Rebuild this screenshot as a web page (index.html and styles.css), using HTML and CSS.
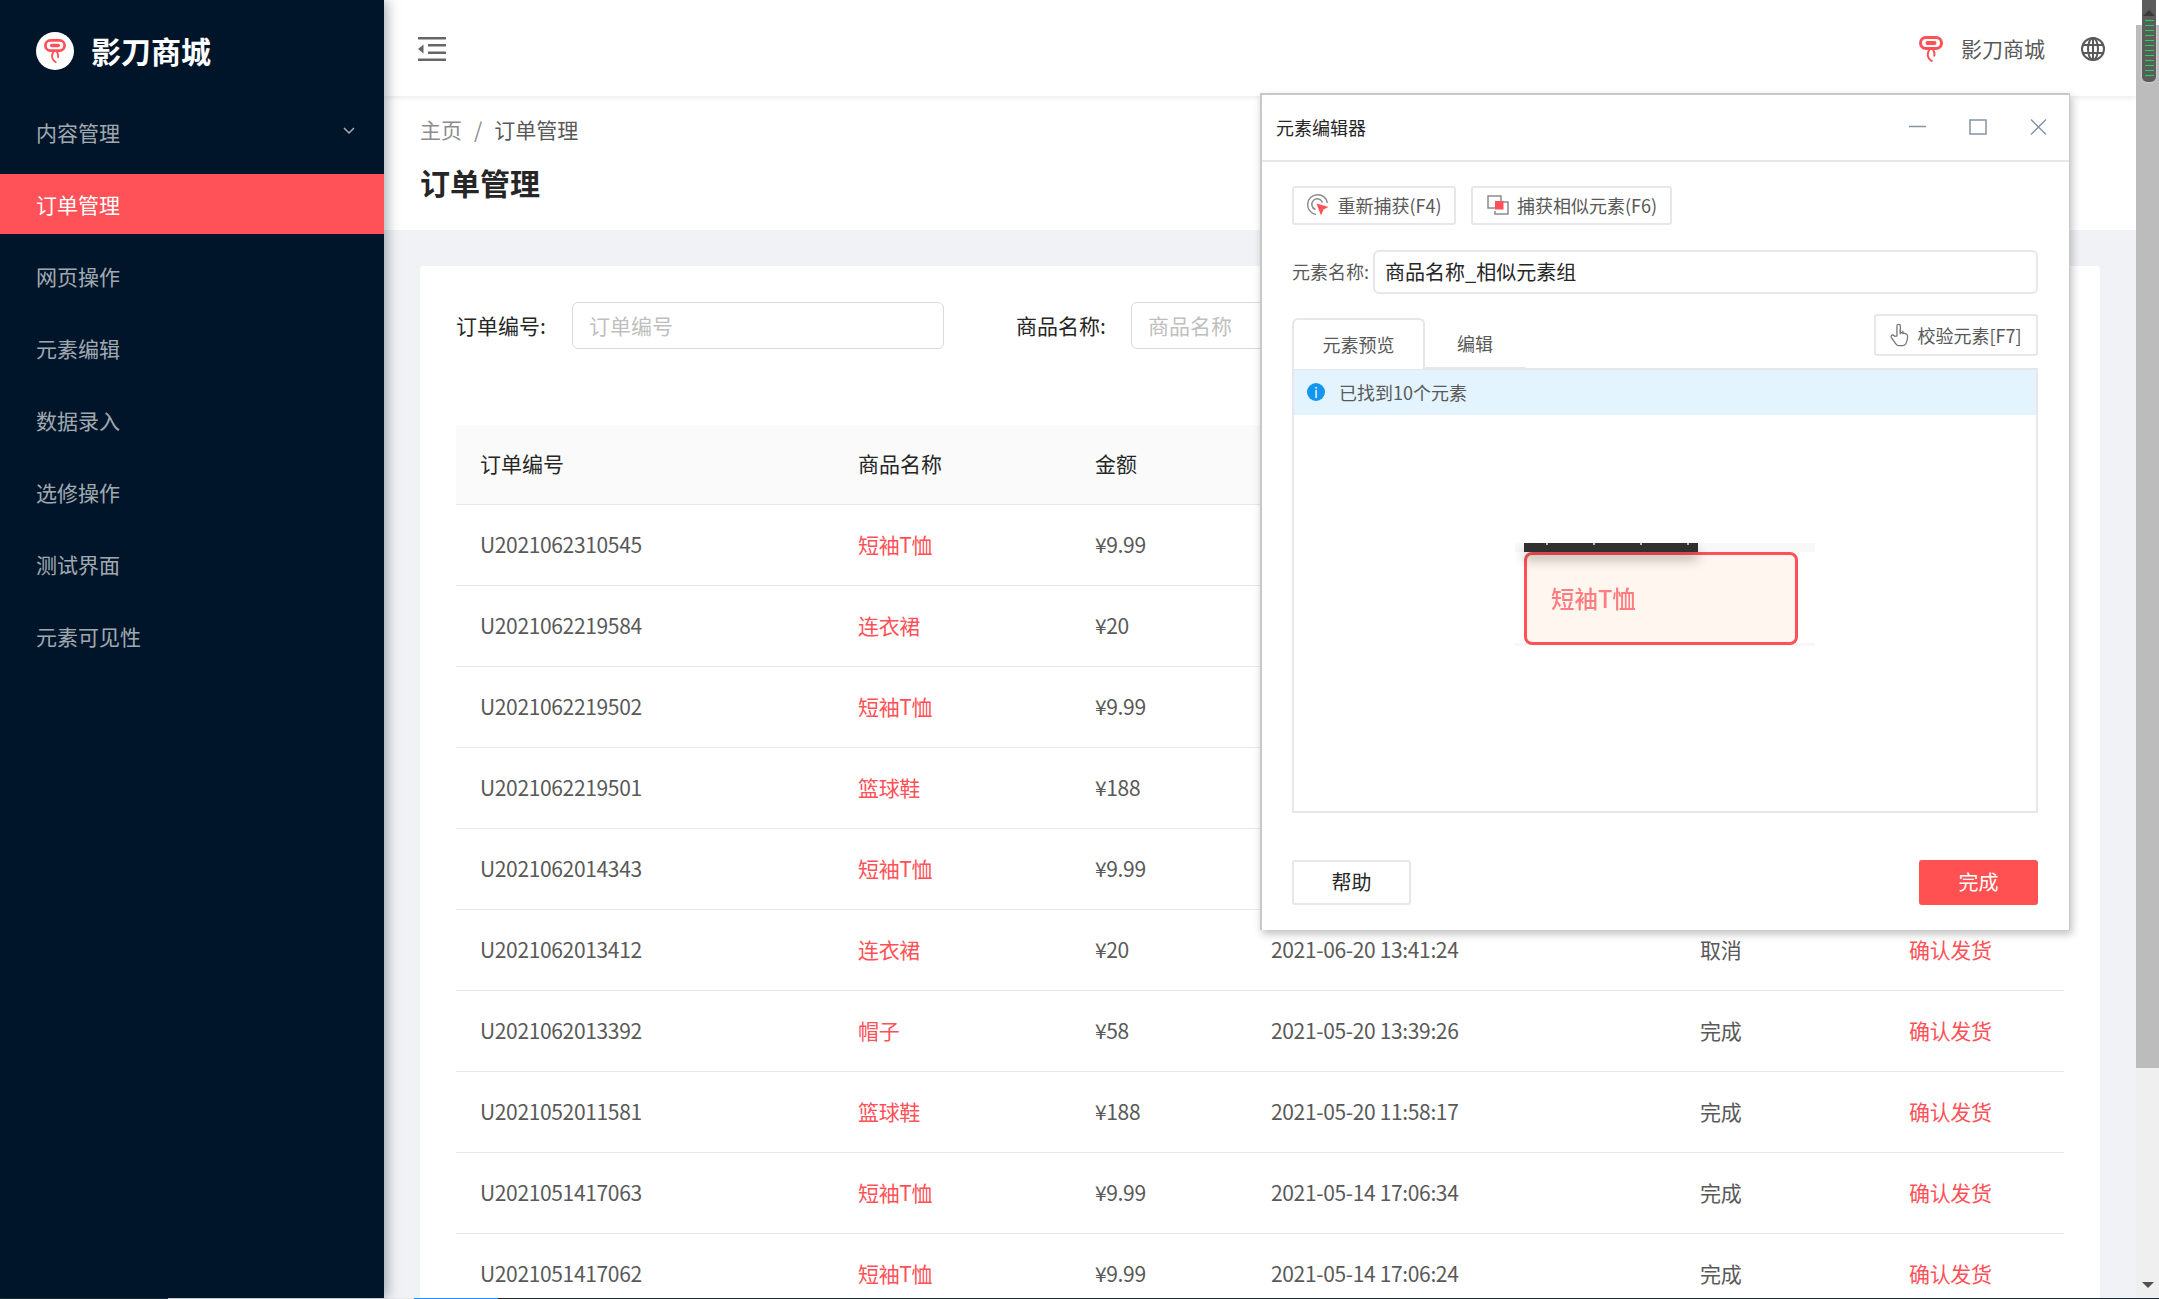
FILE: index.html
```html
<!DOCTYPE html>
<html lang="zh-CN">
<head>
  <meta charset="UTF-8" />
  <title>订单管理</title>
  <link rel="stylesheet" href="styles.css">
</head>
<body>
  <svg class="defs" width="0" height="0">
    <symbol id="logo" viewBox="0 0 24 26">
      <rect x="1.500" y="1.500" width="21" height="11" rx="5.500" fill="none" stroke="#ff5157" stroke-width="3"/>
      <rect x="6.500" y="5" width="11" height="4" rx="2" fill="#ff5157"/>
      <path d="M10.500 13.500c-2 3-2.500 6-.5 9 .8 1.300 2 2.200 3.500 3M14 13.500c1.500 2.500 2 4.500 1 7" fill="none" stroke="#ff5157" stroke-width="2"/>
    </symbol>
  </svg>

  <div class="app">
    <aside class="sidebar">
      <div class="brand">
        <span class="brand-mark"><svg width="22" height="24"><use href="#logo"/></svg></span>
        <span class="brand-name">影刀商城</span>
      </div>
      <ul class="menu">
        <li class="menu-item">内容管理
          <svg class="chevron" width="12" height="8" viewBox="0 0 12 8"><path d="M1 1l5 5 5-5" fill="none" stroke="currentColor" stroke-width="1.500"/></svg>
        </li>
        <li class="menu-item active">订单管理</li>
        <li class="menu-item">网页操作</li>
        <li class="menu-item">元素编辑</li>
        <li class="menu-item">数据录入</li>
        <li class="menu-item">选修操作</li>
        <li class="menu-item">测试界面</li>
        <li class="menu-item">元素可见性</li>
      </ul>
    </aside>

    <div class="main">
      <header class="topbar">
        <svg class="toggle" width="28" height="24" viewBox="0 0 28 24" fill="#666">
          <rect x="0" y="0" width="28" height="2.500"/>
          <rect x="10" y="7" width="18" height="2.500"/>
          <rect x="10" y="14.500" width="18" height="2.500"/>
          <rect x="0" y="21.500" width="28" height="2.500"/>
          <path d="M0 12l5.500-4.500v9z"/>
        </svg>
        <div class="topbar-right">
          <svg width="24" height="26"><use href="#logo"/></svg>
          <span class="shop-name">影刀商城</span>
          <svg class="globe" width="24" height="24" viewBox="0 0 24 24" fill="none" stroke="#595959" stroke-width="2">
            <circle cx="12" cy="12" r="11"/>
            <ellipse cx="12" cy="12" rx="5" ry="11"/>
            <path d="M12 1v22M1.500 8h21M1.500 16h21"/>
          </svg>
        </div>
      </header>

      <div class="page-head">
        <div class="breadcrumb"><span class="crumb-link">主页</span><span class="crumb-sep">/</span><span>订单管理</span></div>
        <h1 class="page-title">订单管理</h1>
      </div>

      <div class="content">
        <div class="card">
          <form class="filter">
            <label class="filter-label">订单编号:</label>
            <input class="filter-input" type="text" placeholder="订单编号">
            <label class="filter-label second">商品名称:</label>
            <input class="filter-input" type="text" placeholder="商品名称">
          </form>

          <table class="orders">
            <colgroup>
              <col class="c-no"><col class="c-name"><col class="c-price"><col class="c-time"><col class="c-state"><col class="c-action">
            </colgroup>
            <thead>
              <tr><th>订单编号</th><th>商品名称</th><th>金额</th><th></th><th></th><th></th></tr>
            </thead>
            <tbody>
              <tr><td>U2021062310545</td><td class="red">短袖T恤</td><td>¥9.99</td><td></td><td></td><td></td></tr>
              <tr><td>U2021062219584</td><td class="red">连衣裙</td><td>¥20</td><td></td><td></td><td></td></tr>
              <tr><td>U2021062219502</td><td class="red">短袖T恤</td><td>¥9.99</td><td></td><td></td><td></td></tr>
              <tr><td>U2021062219501</td><td class="red">篮球鞋</td><td>¥188</td><td></td><td></td><td></td></tr>
              <tr><td>U2021062014343</td><td class="red">短袖T恤</td><td>¥9.99</td><td></td><td></td><td></td></tr>
              <tr><td>U2021062013412</td><td class="red">连衣裙</td><td>¥20</td><td>2021-06-20 13:41:24</td><td>取消</td><td class="red">确认发货</td></tr>
              <tr><td>U2021062013392</td><td class="red">帽子</td><td>¥58</td><td>2021-05-20 13:39:26</td><td>完成</td><td class="red">确认发货</td></tr>
              <tr><td>U2021052011581</td><td class="red">篮球鞋</td><td>¥188</td><td>2021-05-20 11:58:17</td><td>完成</td><td class="red">确认发货</td></tr>
              <tr><td>U2021051417063</td><td class="red">短袖T恤</td><td>¥9.99</td><td>2021-05-14 17:06:34</td><td>完成</td><td class="red">确认发货</td></tr>
              <tr><td>U2021051417062</td><td class="red">短袖T恤</td><td>¥9.99</td><td>2021-05-14 17:06:24</td><td>完成</td><td class="red">确认发货</td></tr>
            </tbody>
          </table>
        </div>
      </div>
    </div>

    <div class="scrollbar">
      <div class="scroll-up"></div>
      <div class="scroll-thumb"></div>
      <div class="scroll-track"><span class="arrow-down"></span></div>
      <div class="scroll-overlay">
        <span class="arrow-up"></span>
        <span class="dashes"></span>
      </div>
    </div>
  </div>

  <div class="taskbar-edge">
    <span class="edge-dark"></span><span class="edge-light"></span><span class="edge-blue"></span><span class="edge-rest"></span>
  </div>

  <section class="editor">
    <div class="editor-title">
      <span>元素编辑器</span>
      <div class="win-btns">
        <svg width="17" height="17" viewBox="0 0 17 17"><path d="M0 8.500h17" stroke="#8592a6" stroke-width="1.500"/></svg>
        <svg width="18" height="16" viewBox="0 0 18 16"><rect x="1" y="1" width="16" height="14" fill="none" stroke="#8592a6" stroke-width="1.500"/></svg>
        <svg width="17" height="16" viewBox="0 0 17 16"><path d="M1 .5l15 15M16 .5l-15 15" fill="none" stroke="#8592a6" stroke-width="1.400"/></svg>
      </div>
    </div>

    <div class="editor-body">
      <div class="capture-row">
        <button type="button" class="btn">
          <svg width="24" height="24" viewBox="0 0 24 24" fill="none" stroke="#8c8c8c" stroke-width="1.500">
            <path d="M10 21.500A10 10 0 1 1 21.500 10"/>
            <path d="M9.500 16.500A5.500 5.500 0 1 1 16.500 9.500"/>
            <path d="M10.500 10.500l12 3.500-5 2.500-2.500 6z" fill="#ff5157" stroke="none"/>
          </svg>
          重新捕获(F4)
        </button>
        <button type="button" class="btn">
          <svg width="24" height="24" viewBox="0 0 24 24" fill="none" stroke="#8c8c8c" stroke-width="1.500">
            <path d="M10 15H2V3h13v5"/>
            <path d="M17 9h5v12H9v-3"/>
            <rect x="9" y="8" width="8.500" height="8.500" fill="#ff5157" stroke="none"/>
          </svg>
          捕获相似元素(F6)
        </button>
      </div>

      <div class="name-row">
        <label class="name-label">元素名称:</label>
        <input class="name-input" type="text" value="商品名称_相似元素组">
      </div>

      <div class="tab-row">
        <div class="tab active">元素预览</div>
        <div class="tab second">编辑</div>
        <button type="button" class="btn check-btn">
          <svg width="19" height="24" viewBox="0 0 22 28" fill="none" stroke="#777" stroke-width="1.500">
            <path d="M8 15V3.500a2 2 0 0 1 4 0V11l6 1.500c2 .6 2.500 2 2.500 3.500 0 3-1 6-2 8-1 1.500-2 2.500-4 2.500h-4c-2 0-3-1-4-2.500L1.500 17c-.8-1.500.2-3 1.500-3 1 0 2 .7 2.500 1.500z"/>
            <path d="M12 8v5M15 9v4"/>
          </svg>
          校验元素[F7]
        </button>
      </div>

      <div class="preview">
        <div class="notice">
          <span class="notice-icon">i</span>
          已找到10个元素
        </div>
        <div class="preview-stage">
          <div class="shot">
            <div class="shot-tooltip"></div>
            <div class="shot-box">短袖T恤</div>
          </div>
        </div>
      </div>

      <div class="editor-foot">
        <button type="button" class="btn foot-btn">帮助</button>
        <button type="button" class="btn foot-btn primary">完成</button>
      </div>
    </div>
  </section>
</body>
</html>
```

FILE: styles.css
```css
:root {
  --red: #ff5157;
  --line: #e8e8e8;
  --text: #595959;
  --dark: #262626;
}

* {
  box-sizing: border-box;
}

html, body {
  height: 100%;
  margin: 0;
  overflow: hidden;
}

body {
  font-family: "Noto Sans CJK SC", "Noto Sans", sans-serif;
  font-size: 21px;
  color: var(--text);
  background: #f0f2f5;
}

.defs {
  position: absolute;
}

.app {
  display: flex;
  height: 1298px;
}

/* sidebar */
.sidebar {
  flex: 0 0 384px;
  background: #00152a;
  box-shadow: 3px 0 12px rgba(0, 21, 41, 0.35);
  position: relative;
  z-index: 2;
}

.brand {
  display: flex;
  align-items: center;
  height: 102px;
  padding-left: 36px;
}

.brand-mark {
  display: flex;
  align-items: center;
  justify-content: center;
  width: 38px;
  height: 38px;
  margin-right: 17px;
  background: #fff;
  border-radius: 50%;
}

.brand-name {
  font-size: 30px;
  font-weight: 700;
  color: #fff;
  padding-bottom: 2px;
}

.menu {
  list-style: none;
  margin: 0;
  padding: 0;
}

.menu-item {
  display: flex;
  align-items: center;
  justify-content: space-between;
  height: 60px;
  margin-bottom: 12px;
  padding: 0 29px 1px 36px;
  color: rgba(255, 255, 255, 0.65);
}

.menu-item.active {
  background: var(--red);
  color: #fff;
}

.chevron {
  margin-top: -2px;
}

/* top */
.main {
  flex: 1;
  min-width: 0;
  overflow: hidden;
}

.topbar {
  display: flex;
  align-items: center;
  justify-content: space-between;
  height: 96px;
  padding: 2px 31px 0 34px;
  background: #fff;
  box-shadow: 0 1px 6px rgba(0, 21, 41, 0.1);
  position: relative;
}

.topbar-right {
  display: flex;
  align-items: center;
}

.shop-name {
  margin: 0 36px 2px 18px;
}

.page-head {
  height: 134px;
  padding: 15px 36px 0;
  background: #fff;
}

.breadcrumb {
  display: flex;
  align-items: center;
  height: 36px;
}

.crumb-link {
  color: #8c8c8c;
}

.crumb-sep {
  margin: 0 12px;
  color: #8c8c8c;
}

.page-title {
  margin: 14px 0 0;
  font-size: 30px;
  line-height: 42px;
  font-weight: 700;
  color: var(--dark);
}

.content {
  padding: 36px 36px 0;
}

.card {
  padding: 36px 36px 0;
  background: #fff;
  border-radius: 3px;
}

/* filter form */
.filter {
  display: flex;
  align-items: center;
  height: 47px;
  margin-bottom: 76px;
  white-space: nowrap;
}

.filter-label {
  flex: 0 0 116px;
  padding-bottom: 2px;
  color: var(--dark);
}

.filter-label.second {
  flex-basis: 115px;
  margin-left: 72px;
}

.filter-input {
  flex: 0 0 372px;
  height: 47px;
  padding: 0 16px 2px;
  border: 1.5px solid #d9d9d9;
  border-radius: 6px;
  font: inherit;
  background: #fff;
}

.filter-input::placeholder {
  color: #bfbfbf;
}

/* table */
.orders {
  width: 100%;
  border-collapse: separate;
  border-spacing: 0;
  table-layout: fixed;
}

.c-no { width: 378px; }
.c-name { width: 237px; }
.c-price { width: 176px; }
.c-time { width: 429px; }
.c-state { width: 209px; }

.orders th,
.orders td {
  height: 81px;
  padding: 0 24px 3px;
  border-bottom: 1px solid var(--line);
  text-align: left;
  font-weight: 400;
}

.orders td {
  letter-spacing: -0.35px;
}

.orders th {
  height: 80px;
  background: #fafafa;
  color: var(--dark);
}

.orders td.red {
  color: var(--red);
}

/* fake scrollbar from the screenshot */
.scrollbar {
  flex: 0 0 23px;
  display: flex;
  flex-direction: column;
  position: relative;
  background: #efefef;
}

.scroll-up {
  height: 25px;
  background: #fff;
}

.scroll-thumb {
  height: 1043px;
  background: #bcbcbc;
}

.scroll-track {
  flex: 1;
  display: flex;
  align-items: flex-end;
  justify-content: center;
  padding-bottom: 10px;
}

.arrow-down {
  border-left: 6px solid transparent;
  border-right: 6px solid transparent;
  border-top: 6px solid #505050;
}

.scroll-overlay {
  position: absolute;
  top: 0;
  left: 6px;
  width: 14px;
  height: 82px;
  display: flex;
  flex-direction: column;
  align-items: center;
  padding-top: 10px;
  background: #5c5c5c;
  border-radius: 0 0 5px 5px;
  box-shadow: 0 0 2px #fff;
}

.arrow-up {
  border-left: 6px solid transparent;
  border-right: 6px solid transparent;
  border-bottom: 6px solid #3a3a3a;
}

.dashes {
  width: 9px;
  height: 60px;
  margin-top: 4px;
  background: repeating-linear-gradient(#1fd655 0 1px, transparent 1px 5px);
}

.taskbar-edge {
  display: flex;
  height: 1px;
}

.edge-dark { width: 168px; background: #1c3038; }
.edge-light { width: 246px; background: #e8eaed; }
.edge-blue { width: 84px; background: #1e90ff; }
.edge-rest { flex: 1; background: #1c2b33; }

/* floating editor window */
.editor {
  position: absolute;
  left: 1260px;
  top: 93px;
  width: 810px;
  height: 837px;
  display: flex;
  flex-direction: column;
  background: #fff;
  border: 2px solid #c8c8c8;
  border-bottom: 0;
  border-right-width: 1px;
  box-shadow: 2px 4px 8px rgba(0, 0, 0, 0.25);
  z-index: 3;
}

.editor-title {
  flex: 0 0 67px;
  display: flex;
  align-items: center;
  justify-content: space-between;
  padding: 0 22px 2px 14px;
  border-bottom: 2px solid #e6e6ec;
  font-size: 18px;
  color: var(--dark);
}

.win-btns {
  display: flex;
  align-items: center;
  gap: 43px;
}

.editor-body {
  flex: 1;
  padding: 24px 31px 0 30px;
}

.btn {
  display: inline-flex;
  align-items: center;
  justify-content: center;
  padding: 0;
  font: inherit;
  font-size: 18px;
  color: var(--text);
  background: #fff;
  border: 2px solid #e6e6ec;
  border-radius: 3px;
  cursor: pointer;
}

.capture-row {
  display: flex;
  gap: 15px;
  height: 39px;
}

.capture-row .btn {
  gap: 7px;
  padding-bottom: 1px;
}

.capture-row .btn:first-child { width: 164px; }
.capture-row .btn:last-child { width: 201px; }

.name-row {
  display: flex;
  align-items: center;
  margin-top: 25px;
}

.name-label {
  flex: 0 0 81px;
  font-size: 18px;
  padding-bottom: 2px;
}

.name-input {
  flex: 1;
  height: 44px;
  padding: 0 10px 2px;
  font: inherit;
  font-size: 20px;
  color: var(--dark);
  border: 2px solid #e6e6ec;
  border-radius: 6px;
}

.tab-row {
  display: flex;
  align-items: flex-end;
  height: 76px;
  position: relative;
  margin-top: -2px;
}

.tab {
  width: 133px;
  height: 51px;
  line-height: 50px;
  text-align: center;
  font-size: 18px;
  margin-bottom: -1px;
  background: #fff;
  border-bottom: 2px solid #e6e6ec;
}

.tab.second {
  width: 100px;
}

.tab.active {
  line-height: 48px;
  border: 2px solid #e6e6ec;
  border-bottom: 0;
  border-radius: 6px 6px 0 0;
  position: relative;
  z-index: 1;
}

.check-btn {
  position: absolute;
  right: 0;
  top: 22px;
  width: 164px;
  height: 42px;
  gap: 8px;
  padding-bottom: 1px;
}

.preview {
  height: 445px;
  display: flex;
  flex-direction: column;
  border: 2px solid #e6e6ec;
}

.notice {
  display: flex;
  align-items: center;
  flex: 0 0 45px;
  padding: 0 0 1px 13px;
  gap: 14px;
  font-size: 18px;
  background: #e3f4fe;
}

.notice-icon {
  width: 18px;
  height: 18px;
  border-radius: 50%;
  background: #1296f0;
  color: #fff;
  font-size: 14px;
  line-height: 18px;
  text-align: center;
}

.preview-stage {
  flex: 1;
  display: flex;
  justify-content: center;
  padding: 128px 0 0 0;
}

.shot {
  width: 300px;
  height: 103px;
  padding: 0 17px 0 9px;
  background: linear-gradient(#f8f8f8 9px, #fff 9px 100px, #f8f8f8 100px);
  position: relative;
  filter: blur(0.5px);
}

.shot-tooltip {
  width: 174px;
  height: 9px;
  background:
    repeating-linear-gradient(90deg, transparent 0 22px, #bbb 22px 24px, transparent 24px 47px) 0 0 / 100% 2px no-repeat,
    #303030;
  box-shadow: 0 8px 12px rgba(0, 0, 0, 0.28);
  position: relative;
  z-index: 1;
}

.shot-box {
  display: flex;
  align-items: center;
  height: 93px;
  padding: 0 0 2px 24px;
  font-size: 23.500px;
  font-weight: 500;
  color: #ff7d80;
  background: #fff7ef;
  border: 3px solid var(--red);
  border-radius: 8px;
}

.editor-foot {
  display: flex;
  justify-content: space-between;
  margin-top: 47px;
}

.foot-btn {
  width: 119px;
  height: 45px;
  font-size: 20px;
  padding-bottom: 2px;
  color: var(--dark);
}

.foot-btn.primary {
  background: #ff5151;
  border-color: #ff5151;
  color: #fff;
}
```
